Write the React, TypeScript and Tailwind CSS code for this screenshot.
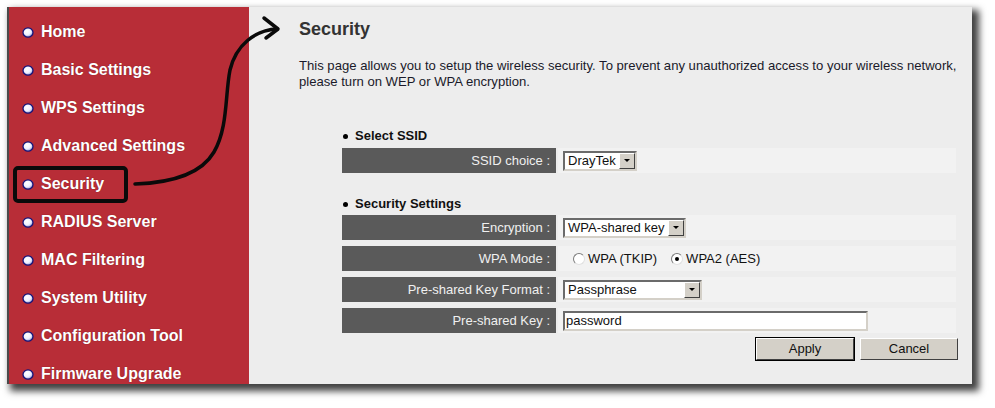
import React from "react";

const menu = [
  "Home",
  "Basic Settings",
  "WPS Settings",
  "Advanced Settings",
  "Security",
  "RADIUS Server",
  "MAC Filtering",
  "System Utility",
  "Configuration Tool",
  "Firmware Upgrade",
];

function Bullet() {
  return (
    <svg width="12" height="11" viewBox="0 0 12 11" className="shrink-0">
      <defs>
        <radialGradient id="bg" cx="40%" cy="35%" r="65%">
          <stop offset="0%" stopColor="#ffffff" />
          <stop offset="60%" stopColor="#eef0ff" />
          <stop offset="100%" stopColor="#9aa0d8" />
        </radialGradient>
      </defs>
      <ellipse cx="6" cy="5.5" rx="5" ry="4.6" fill="url(#bg)" stroke="#14147a" strokeWidth="1.3" />
    </svg>
  );
}

function Arrow() {
  return (
    <svg width="8" height="5" viewBox="0 0 8 5">
      <path d="M1 1 L7 1 L4 4 Z" fill="#000" />
    </svg>
  );
}

function Select({ value, width }: { value: string; width: number }) {
  return (
    <div
      className="flex h-[20px] items-stretch border-2 border-t-[#6b6b6b] border-l-[#6b6b6b] border-r-[#d4d0c8] border-b-[#d4d0c8] bg-white"
      style={{ width }}
    >
      <span className="flex-1 whitespace-nowrap pl-[3px] text-[13px] leading-[16px] text-[#111]">{value}</span>
      <span className="flex w-[16px] items-center justify-center border border-t-white border-l-white border-r-[#404040] border-b-[#404040] bg-[#d4d0c8]">
        <Arrow />
      </span>
    </div>
  );
}

function Radio({ checked }: { checked?: boolean }) {
  return (
    <span className="flex h-[12px] w-[12px] items-center justify-center rounded-full border border-t-[#7a7a7a] border-l-[#7a7a7a] border-r-[#e0e0e0] border-b-[#e0e0e0] bg-white">
      {checked && <span className="h-[4px] w-[4px] rounded-full bg-black" />}
    </span>
  );
}

function Row({ label, children }: { label: string; children: React.ReactNode }) {
  return (
    <div className="flex h-[25px] gap-[2px]">
      <div className="flex w-[214px] items-center justify-end bg-[#5a5a5a] pr-[6px] text-[13px] text-[#f0f0f0] whitespace-nowrap">
        {label}
      </div>
      <div className="flex flex-1 items-center bg-[#f2f2f2] pl-[5px]">{children}</div>
    </div>
  );
}

function Button({ label, def }: { label: string; def?: boolean }) {
  return (
    <div className={def ? "border border-black" : "border border-transparent"}>
      <div className="flex h-[22px] w-[98px] items-center justify-center border border-t-white border-l-white border-r-[#404040] border-b-[#404040] bg-[#d4d0c8] text-[13px] text-[#111]">
        {label}
      </div>
    </div>
  );
}

export default function App() {
  return (
    <div
      className="relative h-[408px] w-[995px] overflow-hidden bg-white pl-[7px] pt-[7px]"
      style={{ fontFamily: '"Liberation Sans", Arial, sans-serif' }}
    >
      <div className="flex h-[377px] w-[965px] border-l-2 border-[#4a4a4a] shadow-[5px_5px_7px_2px_rgba(0,0,0,0.75)]">
        <div className="flex w-[240px] flex-col overflow-hidden bg-[#b82d37] pl-[13px] pt-[6px]">
          {menu.map((m) => (
            <div key={m} className="flex h-[38px] shrink-0 items-center gap-[7px]">
              <Bullet />
              <span className="whitespace-nowrap text-[16px] font-bold text-white [text-shadow:0_0_1px_rgba(60,0,0,0.6)]">
                {m}
              </span>
            </div>
          ))}
        </div>
        <div className="flex-1 bg-[#ededed] pl-[50px] pt-[11px]">
          <h1 className="text-[18px] font-bold leading-[22px] text-[#333]">Security</h1>
          <p className="mt-[18px] whitespace-nowrap text-[13.1px] leading-[16px] text-[#1a1a2a]">
            This page allows you to setup the wireless security. To prevent any unauthorized access to your wireless network,
            <br />
            please turn on WEP or WPA encryption.
          </p>
          <div className="ml-[43px] mt-[38px] w-[617px]">
            <div className="flex h-[16px] items-center gap-[7px] pl-[1px] text-[13px] font-bold text-[#111]">
              <span className="h-[5px] w-[5px] rounded-full bg-black" />
              <span>Select SSID</span>
            </div>
            <div className="mt-[4px] w-[614px]">
              <Row label="SSID choice :">
                <Select value="DrayTek" width={74} />
              </Row>
            </div>
            <div className="mt-[23px] flex h-[16px] items-center gap-[7px] pl-[1px] text-[13px] font-bold text-[#111]">
              <span className="h-[5px] w-[5px] rounded-full bg-black" />
              <span>Security Settings</span>
            </div>
            <div className="mt-[3px] flex w-[614px] flex-col gap-[6px]">
              <Row label="Encryption :">
                <Select value="WPA-shared key" width={123} />
              </Row>
              <Row label="WPA Mode :">
                <div className="flex items-center pl-[10px] text-[13px] text-[#111]">
                  <Radio />
                  <span className="ml-[3px]">WPA (TKIP)</span>
                  <span className="ml-[14px]"><Radio checked /></span>
                  <span className="ml-[3px]">WPA2 (AES)</span>
                </div>
              </Row>
              <Row label="Pre-shared Key Format :">
                <Select value="Passphrase" width={139} />
              </Row>
              <Row label="Pre-shared Key :">
                <div className="flex h-[20px] w-[305px] items-center border-2 border-t-[#6b6b6b] border-l-[#6b6b6b] border-r-[#d4d0c8] border-b-[#d4d0c8] bg-white pl-[1px] text-[13px] text-[#111]">
                  password
                </div>
              </Row>
            </div>
            <div className="mt-[4px] flex justify-end gap-[4px]">
              <Button label="Apply" def />
              <Button label="Cancel" />
            </div>
          </div>
        </div>
      </div>
      <svg
        className="pointer-events-none absolute left-0 top-0"
        width="995"
        height="408"
        viewBox="0 0 995 408"
      >
        <rect x="15" y="168" width="111" height="33" rx="3" fill="none" stroke="#0a0a0a" strokeWidth="4" />
        <path
          d="M135 184 C 165 183, 200 176, 214 152 C 228 128, 225 95, 230 70 C 236 45, 255 30, 277 29"
          fill="none"
          stroke="#0a0a0a"
          strokeWidth="3.5"
          strokeLinecap="round"
        />
        <path d="M264 18 L278 29 L266 38" fill="none" stroke="#0a0a0a" strokeWidth="3.5" strokeLinecap="round" strokeLinejoin="round" />
      </svg>
    </div>
  );
}
